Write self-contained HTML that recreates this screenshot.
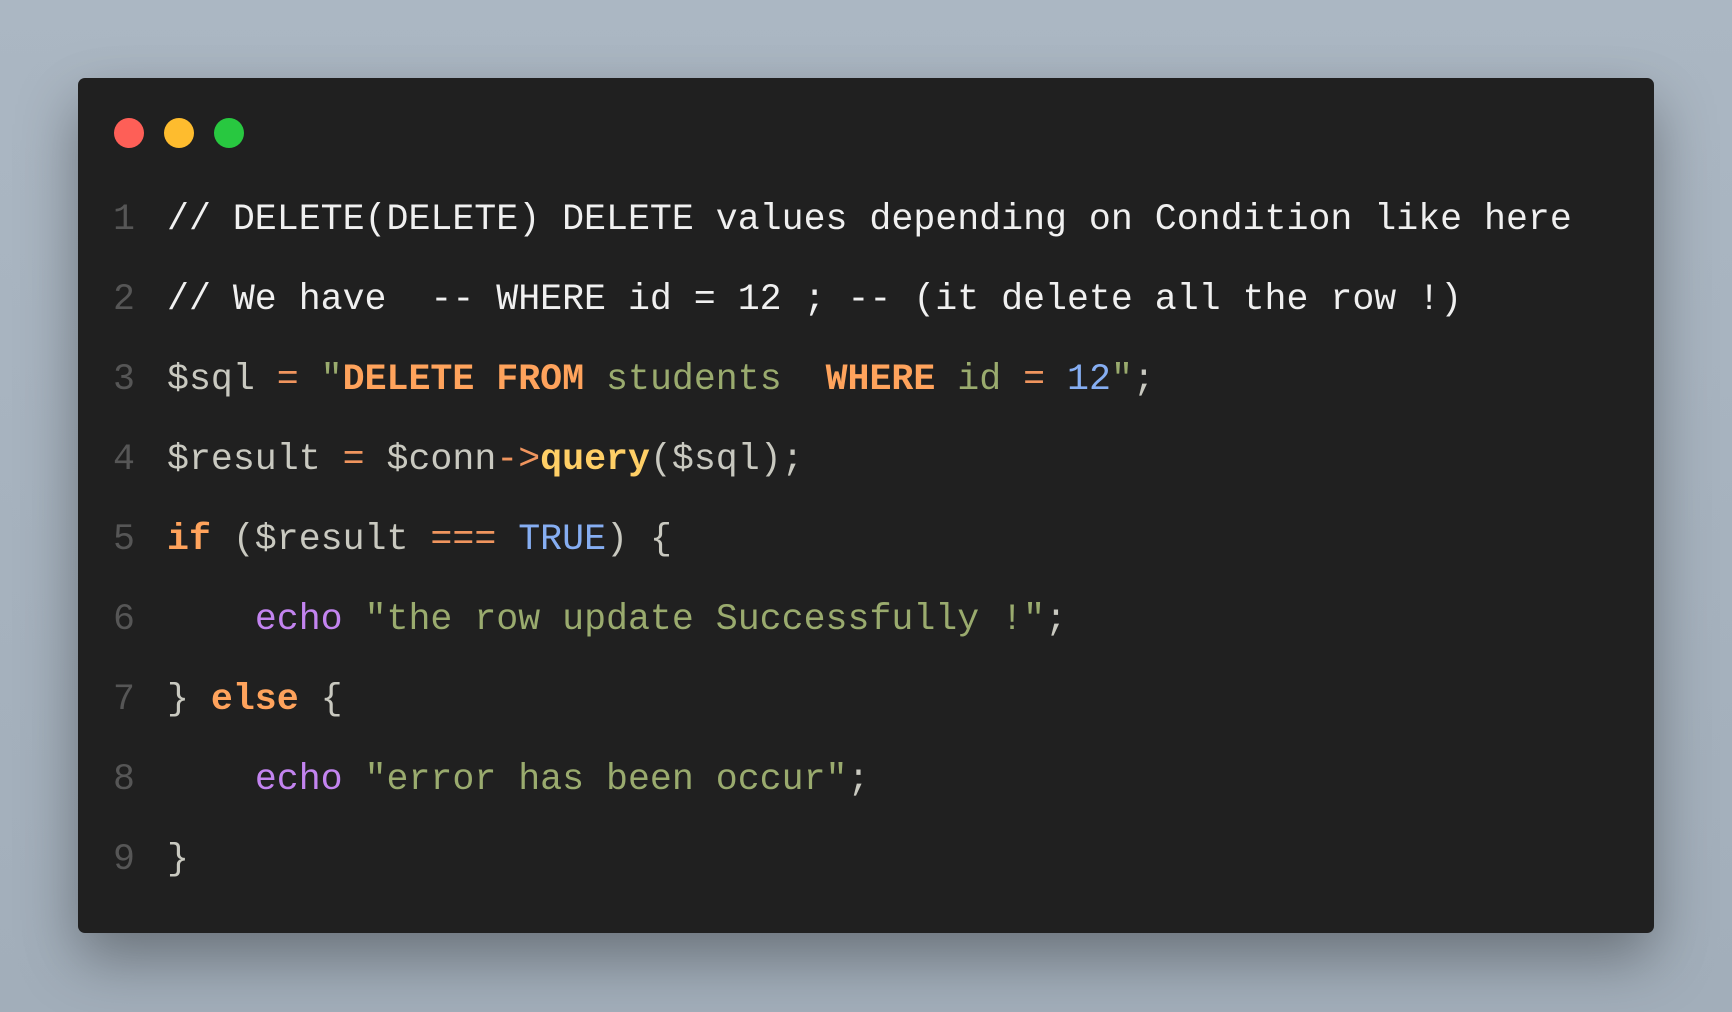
<!DOCTYPE html>
<html><head><meta charset="utf-8"><style>
html,body{margin:0;padding:0;width:1732px;height:1012px;overflow:hidden;}
body{background:linear-gradient(180deg,#abb7c3 0%,#a2aeba 100%);position:relative;font-family:"Liberation Mono",monospace;}
.win{position:absolute;left:78px;top:78px;width:1576px;height:855px;background:#202020;border-radius:7px;box-shadow:0 25px 60px rgba(0,0,0,.35);}
.dot{position:absolute;top:40px;width:30px;height:30px;border-radius:50%;}
.code{position:absolute;left:0;top:102px;font-size:36.6px;line-height:80px;color:#c9c9c0;}
.ln{display:inline-block;width:57px;text-align:right;margin-right:32px;color:#565656;}
.l{display:block;height:80px;white-space:pre;}
.c{color:#f0f0f0}
.op{color:#f0955e}
.kw{color:#ffa35c;font-weight:bold}
.s{color:#9aab6e}
.n{color:#86aef2}
.q{color:#ffcf66;font-weight:bold}
.e{color:#c384f0}
</style></head><body>
<div class="win">
<div class="dot" style="left:36px;background:#fe5f57"></div>
<div class="dot" style="left:86px;background:#febc2e"></div>
<div class="dot" style="left:136px;background:#28c840"></div>
<div class="code"><span class="l"><span class="ln">1</span><span class="c">// DELETE(DELETE) DELETE values depending on Condition like here</span></span><span class="l"><span class="ln">2</span><span class="c">// We have  -- WHERE id = 12 ; -- (it delete all the row !)</span></span><span class="l"><span class="ln">3</span>$sql <span class="op">=</span> <span class="s">"</span><span class="kw">DELETE FROM</span><span class="s"> students  </span><span class="kw">WHERE</span><span class="s"> id </span><span class="op">=</span> <span class="n">12</span><span class="s">"</span>;</span><span class="l"><span class="ln">4</span>$result <span class="op">=</span> $conn<span class="op">-&gt;</span><span class="q">query</span>($sql);</span><span class="l"><span class="ln">5</span><span class="kw">if</span> ($result <span class="op">===</span> <span class="n">TRUE</span>) {</span><span class="l"><span class="ln">6</span>    <span class="e">echo</span> <span class="s">"the row update Successfully !"</span>;</span><span class="l"><span class="ln">7</span>} <span class="kw">else</span> {</span><span class="l"><span class="ln">8</span>    <span class="e">echo</span> <span class="s">"error has been occur"</span>;</span><span class="l"><span class="ln">9</span>}</span></div>
</div>
</body></html>
